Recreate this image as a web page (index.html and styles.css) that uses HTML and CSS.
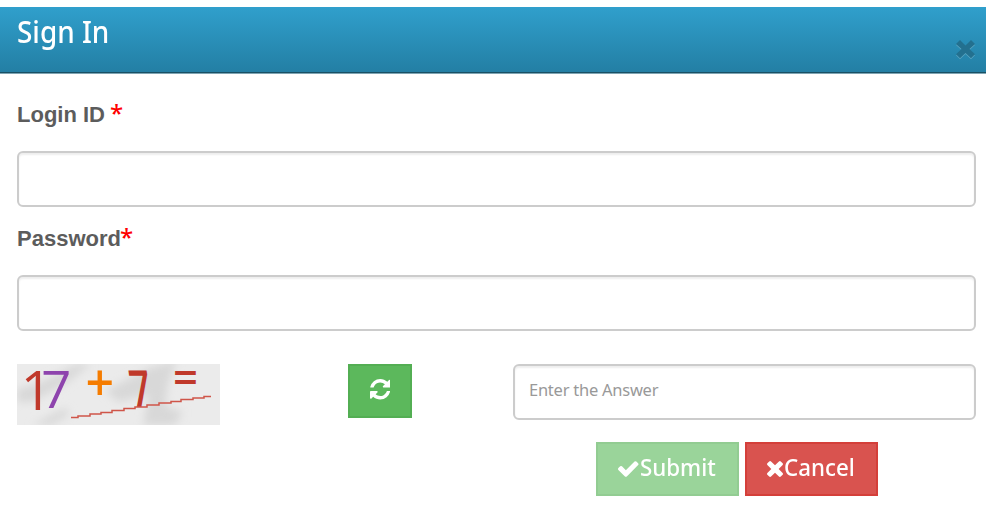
FILE: index.html
```
<!DOCTYPE html>
<html lang="en">
<head>
    <meta charset="UTF-8">
    <meta name="viewport" content="width=device-width, initial-scale=1.0">
    <title>Sign In</title>
    <link rel="stylesheet" href="styles.css">
</head>
<body>

    <div class="modal-header">
        <h1>Sign In</h1>
        <button type="button" class="close-btn" aria-label="Close">
            <svg viewBox="0 0 19 20"><path d="M4 1l5.500 5.400L15 1l4 3.900-5.500 5.100 5.500 5.300-4 3.900-5.500-5.300L4 19.200l-4-3.900L5.500 10 0 4.900z"/></svg>
        </button>
    </div>

    <form class="login-form">
        <label for="login">Login ID <span class="required">*</span></label>
        <input type="text" id="login" name="login">
        <label for="password">Password<span class="required">*</span></label>
        <input type="password" id="password" name="password">

        <div class="captcha-row">
            <svg class="captcha" viewBox="0 0 203 61">
                <defs>
                    <filter id="soft" x="-20%" y="-20%" width="140%" height="140%"><feGaussianBlur stdDeviation="4"/></filter>
                    <clipPath id="frame"><rect width="203" height="61"/></clipPath>
                </defs>
                <rect width="203" height="61" fill="#ebebeb"/>
                <g clip-path="url(#frame)">
                    <g filter="url(#soft)" fill="#d8d8d8">
                        <path d="M0 25L20 20 60 0H74L48 20 15 38H0z"/>
                        <path d="M88 27L132 4 160-4 151 20 148 42 166 48 158 61H126L132 30 102 38z"/>
                        <path d="M15 61L48 44 53 50 34 61z"/>
                    </g>
                </g>
                <text class="digit medium" x="3.800" y="46" font-size="55" fill="#c0392b">1</text>
                <text class="digit thin" x="24.200" y="43.700" font-size="52" textLength="30" lengthAdjust="spacingAndGlyphs" fill="#8e44ad">7</text>
                <text class="sign" x="68.400" y="36.500" font-size="50" fill="#f57c00">+</text>
                <text class="digit" transform="translate(115.200 43.200) skewX(8)" font-size="51" textLength="21" lengthAdjust="spacingAndGlyphs" fill="#c0392b">7</text>
                <text class="sign" x="156" y="29.800" font-size="45" textLength="25" lengthAdjust="spacingAndGlyphs" fill="#c0392b">=</text>
                <path d="M54 53.500h7v-1.500h12v-2h11v-1.500h11v-2h12v-2h11v-1.500h12v-2h12v-2h12v-1.500h10v-2h12v-1.500h11v-1.500h7" fill="none" stroke="#cf5549" stroke-width="1.500"/>
            </svg>
            <button type="button" class="btn refresh-btn" aria-label="Refresh">
                <svg viewBox="128 128 1536 1536"><path d="M1639 1056q0 5-1 7-64 268-268 434.500t-478 166.500q-146 0-282.500-55t-243.500-157l-129 129q-19 19-45 19t-45-19-19-45v-448q0-26 19-45t45-19h448q26 0 45 19t19 45-19 45l-137 137q71 66 161 102t187 36q134 0 250-65t186-179q11-17 53-117 8-23 30-23h192q13 0 22.500 9.500t9.500 22.500zm25-800v448q0 26-19 45t-45 19h-448q-26 0-45-19t-19-45 19-45l138-138q-148-137-349-137-134 0-250 65t-186 179q-11 17-53 117-8 23-30 23h-199q-13 0-22.500-9.500t-9.500-22.500v-7q65-268 270-434.500t480-166.500q146 0 284 55.500t245 156.500l130-129q19-19 45-19t45 19 19 45z"/></svg>
            </button>
            <input type="text" class="answer" name="answer" placeholder="Enter the Answer">
        </div>

        <div class="actions">
            <button type="submit" class="btn submit-btn" disabled>
                <svg viewBox="121 334 1550 1188"><path d="M1671 566q0 40-28 68l-724 724-136 136q-28 28-68 28t-68-28l-136-136-362-362q-28-28-28-68t28-68l136-136q28-28 68-28t68 28l294 295 656-657q28-28 68-28t68 28l136 136q28 28 28 68z"/></svg><span>Submit</span>
            </button>
            <button type="button" class="btn cancel-btn">
                <svg viewBox="302 366 1188 1188"><path d="M1490 1322q0 40-28 68l-136 136q-28 28-68 28t-68-28l-294-294-294 294q-28 28-68 28t-68-28l-136-136q-28-28-28-68t28-68l294-294-294-294q-28-28-28-68t28-68l136-136q28-28 68-28t68 28l294 294 294-294q28-28 68-28t68 28l136 136q28 28 28 68t-28 68l-294 294 294 294q28 28 28 68z"/></svg><span>Cancel</span>
            </button>
        </div>
    </form>

</body>
</html>
```
FILE: styles.css
```
* {
    box-sizing: border-box;
}

body {
    margin: 0;
    padding-top: 7px;
    background: #fff;
    font-family: "Noto Sans", sans-serif;
    overflow: hidden;
}

.modal-header {
    display: flex;
    justify-content: space-between;
    width: 986px;
    height: 66px;
    padding: 0 11px 0 17px;
    background: linear-gradient(#309fcc, #237fa4);
    border-bottom: 1px solid #1a5064;
    box-shadow: 0 1px 0 #7fa5b3;
}

h1 {
    margin: 4px 0 0;
    color: #fff;
    font-size: 31px;
    font-weight: 500;
    line-height: 41px;
    transform: scaleX(0.9);
    transform-origin: left;
}

.close-btn {
    height: 20px;
    margin: 32px 0 0;
    padding: 0;
    border: none;
    background: none;
}

.close-btn svg {
    display: block;
    width: 19px;
    height: 20px;
    fill: #23708f;
    filter: drop-shadow(0 1px 0 #5ba5c1);
}

.login-form {
    padding: 26px 11px 0 17px;
}

label {
    display: block;
    height: 32px;
    margin-bottom: 20px;
    color: #5c5c5c;
    font-family: "Liberation Sans", Arial, sans-serif;
    font-size: 22px;
    font-weight: 700;
    line-height: 32px;
}

.required {
    margin-left: -1px;
    color: #f00;
    font-family: "Noto Sans", sans-serif;
    font-size: 24px;
    font-weight: 500;
    line-height: 1;
}

input {
    display: block;
    width: 100%;
    height: 56px;
    margin-bottom: 16px;
    padding: 0 14px 5px;
    border: 2px solid #ccc;
    border-radius: 6px;
    background: #fff;
    box-shadow: inset 0 2px 2px rgba(0, 0, 0, 0.07);
    font-family: "Noto Sans", sans-serif;
    font-size: 16.5px;
    letter-spacing: -0.25px;
}

input::placeholder {
    color: #999;
    opacity: 1;
}

.captcha-row {
    display: flex;
    align-items: flex-start;
    margin-top: 33px;
}

.captcha {
    width: 203px;
    height: 61px;
    margin-right: 128px;
    overflow: visible;
}

.digit {
    font-family: "Open Sans", sans-serif;
    font-weight: 600;
}

.digit.medium {
    font-weight: 500;
}

.digit.thin {
    font-weight: 400;
}

.sign {
    font-family: "Open Sans", sans-serif;
    font-weight: 600;
}

.btn {
    display: flex;
    align-items: center;
    justify-content: center;
    height: 54px;
    padding: 0;
    border: 2px solid;
    color: #fff;
    font-family: "Noto Sans", sans-serif;
    font-size: 24px;
}

.btn svg {
    fill: #fff;
}

.refresh-btn {
    width: 64px;
    margin-right: 101px;
    padding-bottom: 3px;
    border-color: #53ae53;
    background: #5cb85c;
}

.refresh-btn svg {
    width: 20.5px;
    height: 20.5px;
}

.answer {
    flex: 1;
    width: auto;
    margin-bottom: 0;
}

.actions {
    display: flex;
    gap: 6px;
    margin: 17px 0 0 579px;
}

.submit-btn {
    width: 143px;
    border-color: #92cc92;
    background: #9ad49a;
}

.submit-btn svg {
    width: 20.5px;
    height: 16px;
}

.cancel-btn {
    width: 133px;
    border-color: #d43f3a;
    background: #d9534f;
}

.cancel-btn svg {
    width: 16px;
    height: 16px;
}

.btn span {
    margin: -6px -5px 0 1px;
    font-weight: 500;
    transform: scaleX(0.93);
    transform-origin: left;
}
```
